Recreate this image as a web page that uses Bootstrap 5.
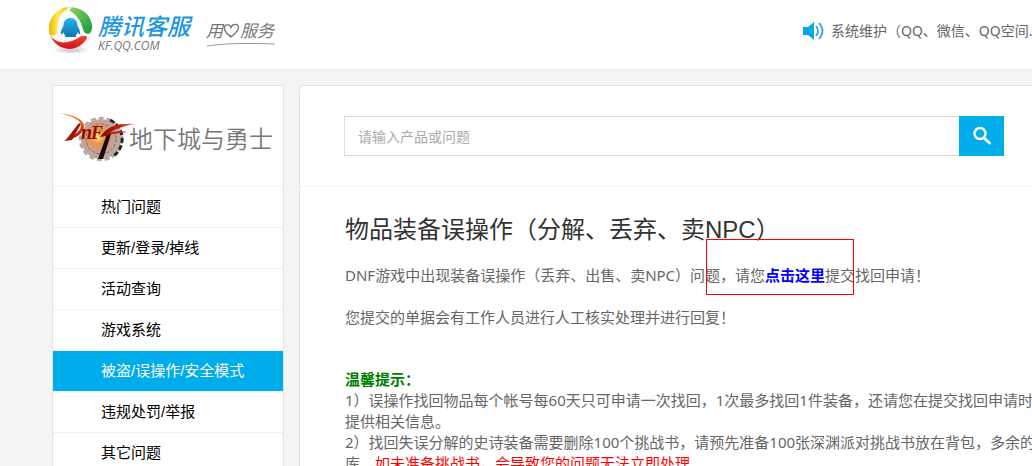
<!DOCTYPE html>
<html lang="zh-CN">
<head>
<meta charset="utf-8">
<meta name="viewport" content="width=device-width, initial-scale=1">
<title>腾讯客服 - 地下城与勇士</title>
<link href="https://cdn.jsdelivr.net/npm/bootstrap@5.3.0/dist/css/bootstrap.min.css" rel="stylesheet">
<style>
body { font-family: "Noto Sans", "Noto Sans CJK SC", sans-serif; font-size: 15px; line-height: 21px; color: #666; background: #f4f4f4; }
.site-head { height: 70px; padding-left: 48px; border-bottom: 1px solid #eaeaea; }
.brand-name { font-size: 23px; line-height: 28px; font-weight: 500; font-style: italic; color: #2196e0; }
.brand-host { font-family: "Open Sans", sans-serif; font-size: 12px; line-height: 12px; font-style: italic; color: #777; }
.slogan { font-size: 17px; line-height: 22px; font-style: italic; color: #777; }
.notice { flex: 0 0 230px; font-size: 14px; }
.notice a { color: #666; margin-left: 7px; }
.page-body { padding: 15px 0 0 52px; gap: 15px; }
.side { flex: 0 0 232px; border: 1px solid #e3e3e3; }
.side-head { height: 100px; padding-left: 3px; }
.side-title { font-size: 24px; line-height: 32px; padding-top: 5px; color: #777; margin-left: -15px; font-weight: 350; }
.side-nav { font-family: "Liberation Sans", "Noto Sans CJK SC", sans-serif; }
.side-nav a { height: 41px; padding: 0 0 2px 48px; border-top: 1px solid #f2f2f2; color: #000; }
.side-nav a.current { background: #00adeb; color: #fff; }
.panel { border: 1px solid #e3e3e3; border-right: 0; border-radius: 4px 0 0 0; min-width: 0; }
.search { height: 101px; padding: 30px 28px 30px 44px; border-bottom: 1px solid #f2f2f2; }
.search input { border: 1px solid #ddd; border-right: 0; padding: 0 13px; font-size: 14px; color: #666; }
.search input::placeholder { color: #aaa; opacity: 1; }
.search button { width: 45px; background: #00adeb; }
.article { padding: 27px 0 0 45px; }
.article h1 { font: 400 24px/32px "Liberation Sans", "Noto Sans CJK SC", sans-serif; color: #333; margin-bottom: 19px; }
.article p { margin-bottom: 21px; }
.article .tips { margin-top: 41px; }
.article .apply { color: #00f; }
.tips strong { color: green; }
.warn { color: #f00; }
.marker { width: 148px; height: 56px; left: -59px; top: -26px; border: 1px solid #f00; pointer-events: none; }
</style>
</head>
<body>
<div class="vh-100 overflow-hidden">
<header class="site-head bg-white d-flex align-items-start">
  <a href="#" class="d-flex text-decoration-none pt-1">
    <svg width="46" height="54" viewBox="0 0 46 54" aria-hidden="true">
      <defs>
        <linearGradient id="gy" x1="0" y1="0" x2="1" y2="0"><stop offset="0" stop-color="#f5b400"/><stop offset=".5" stop-color="#ffe95a"/><stop offset="1" stop-color="#f7c600"/></linearGradient>
        <linearGradient id="gg" x1="0" y1="0" x2="1" y2="1"><stop offset="0" stop-color="#8ed060"/><stop offset="1" stop-color="#129a3a"/></linearGradient>
        <linearGradient id="gr" x1="0" y1="0" x2="0" y2="1"><stop offset="0" stop-color="#f04a3a"/><stop offset="1" stop-color="#cf0d18"/></linearGradient>
        <linearGradient id="gb" x1="0" y1="0" x2="0" y2="1"><stop offset="0" stop-color="#29b0ea"/><stop offset="1" stop-color="#0878b8"/></linearGradient>
        <radialGradient id="gs"><stop offset="0" stop-color="#bbb"/><stop offset="1" stop-color="#fff"/></radialGradient>
      </defs>
      <ellipse cx="23" cy="46" rx="18" ry="4" fill="url(#gs)"/>
      <circle cx="22.500" cy="24.500" r="21" fill="#f8f8f8" stroke="#e0e0e0"/>
      <path d="M19 3C8 5 1 14 1 24c0 4 0 6 1 7 3 2 6 0 7-3C9 16 12 9 19 5z" fill="url(#gy)"/>
      <path d="M25 3.500c11 1 18 9 19 18 0 5-1 7-3 8-3 1-5-1-6-4C33 17 29 11 22 7c0-2 1-3.500 3-3.500z" fill="url(#gg)"/>
      <path d="M3 33c7 7 17 7 27 1 4-3 9-3 9 0-4 7-11 11-17 11-8 0-16-5-19-12z" fill="url(#gr)"/>
      <path d="M22.500 14c-5 0-7 4-7 8-2 3-3 6-2.500 8 1 1 2-1 2.500-2 0 2 1 3 2 3-1 1-1 2 1 2h8c2 0 2-1 1-2 1 0 2-1 2-3 1 1 2 3 2.500 2 .5-2-.5-5-2.500-8 0-4-2-8-7-8z" fill="url(#gb)"/>
    </svg>
    <span class="d-flex flex-column ps-1 pt-2">
      <span class="brand-name text-nowrap">腾讯客服</span>
      <span class="brand-host">KF.QQ.COM</span>
    </span>
  </a>
  <div class="slogan text-nowrap ms-3 pt-3 mt-1">
    <div class="d-flex align-items-center">用<svg width="17" height="16" viewBox="0 0 17 16" aria-hidden="true"><path d="M8 14C4 11 1 8 1.500 4.500 2 1 7 1 8 4.500 10 0 15 1 15.500 4 16 8 11 11 8 14l-1-2" fill="none" stroke="#777" stroke-width="1.300"/></svg>服务</div>
    <svg class="d-block" width="70" height="5" viewBox="0 0 70 5" aria-hidden="true"><path d="M1 4C20 1 45 1 69 2" fill="none" stroke="#999"/></svg>
  </div>
  <div class="notice ms-auto d-flex align-items-center overflow-hidden text-nowrap pt-3 mt-1">
    <svg class="flex-shrink-0" width="22" height="18" viewBox="0 0 22 18" aria-hidden="true"><path d="M1 5h5l6-5v18l-6-5H1z" fill="#00a8e8"/><path d="M14 4q4 5 0 10M17 1q7 8 0 16" fill="none" stroke="#3aa5dd" stroke-width="1.800"/></svg>
    <a href="#" class="text-decoration-none">系统维护（QQ、微信、QQ空间...</a>
  </div>
</header>

<div class="page-body d-flex">
  <aside class="side bg-white">
    <div class="side-head d-flex align-items-center">
      <svg class="flex-shrink-0" width="88" height="56" viewBox="0 0 88 56" aria-hidden="true">
        <defs>
          <radialGradient id="gear" cx=".42" cy=".45"><stop offset="0" stop-color="#ffe27a"/><stop offset=".35" stop-color="#e8954a"/><stop offset=".7" stop-color="#c9a08c"/><stop offset="1" stop-color="#b5aaa6"/></radialGradient>
          <linearGradient id="fire" x1="0" y1="0" x2="0" y2="1"><stop offset="0" stop-color="#f8801c"/><stop offset=".5" stop-color="#e0480f"/><stop offset="1" stop-color="#8a0a05"/></linearGradient>
          <linearGradient id="arm" x1="0" y1="0" x2="1" y2="0"><stop offset="0" stop-color="#7d0a05"/><stop offset=".6" stop-color="#c8230c"/><stop offset="1" stop-color="#f0a090"/></linearGradient>
        </defs>
        <circle cx="45" cy="31" r="20" fill="url(#gear)"/>
        <circle cx="45" cy="31" r="21" fill="none" stroke="#b8aaa5" stroke-width="2.500" stroke-dasharray="5 3"/>
        <path d="M54 12A21 21 0 0 1 56 49" fill="none" stroke="#33231f" stroke-width="3" stroke-dasharray="5 2.500"/>
        <circle cx="45" cy="31" r="15" fill="none" stroke="#a5613a" stroke-width="1" stroke-dasharray="3 2"/>
        <path d="M4 5C18 7 29 12 28 19c-1 7-9 12-21 14 10-4 17-9 18-15C26 12 15 8 4 5z" fill="url(#fire)"/>
        <path d="M23 15 9 33l7-1 9-16z" fill="#a01508"/>
        <text x="25" y="31" font-family="Liberation Serif, serif" font-size="20" font-weight="700" font-style="italic" fill="#8f0d06">n</text>
        <text x="35" y="31" font-family="Liberation Serif, serif" font-size="18" font-weight="700" font-style="italic" fill="#8f0d06">F</text>
        <path d="M51 26 42 51h5l8-25z" fill="#1c0a08"/>
        <path d="M44 29C52 17 64 15 79 16 68 18 60 20 54 25c6-2 12-2 18-1-10 1-17 2-22 4z" fill="url(#arm)"/>
      </svg>
      <div class="side-title text-nowrap">地下城与勇士</div>
    </div>
    <nav class="side-nav">
      <a href="#" class="d-flex align-items-center text-decoration-none">热门问题</a>
      <a href="#" class="d-flex align-items-center text-decoration-none">更新/登录/掉线</a>
      <a href="#" class="d-flex align-items-center text-decoration-none">活动查询</a>
      <a href="#" class="d-flex align-items-center text-decoration-none">游戏系统</a>
      <a href="#" class="current d-flex align-items-center text-decoration-none" aria-current="page">被盗/误操作/安全模式</a>
      <a href="#" class="d-flex align-items-center text-decoration-none">违规处罚/举报</a>
      <a href="#" class="d-flex align-items-center text-decoration-none">其它问题</a>
    </nav>
  </aside>
  <main class="panel bg-white flex-grow-1 overflow-hidden">
    <form class="search d-flex">
      <input type="text" class="form-control rounded-0 shadow-none" placeholder="请输入产品或问题" aria-label="请输入产品或问题">
      <button type="button" class="btn rounded-0 border-0 p-0 flex-shrink-0 d-flex align-items-center justify-content-center" aria-label="搜索">
        <svg width="20" height="20" viewBox="0 0 20 20" aria-hidden="true"><circle cx="8" cy="7.500" r="5.500" fill="none" stroke="#fff" stroke-width="2.500"/><path d="m12 12 5.500 5" stroke="#fff" stroke-width="3" stroke-linecap="round"/></svg>
      </button>
    </form>
    <article class="article text-nowrap">
      <h1>物品装备误操作（分解、丢弃、卖NPC）</h1>
      <p>DNF游戏中出现装备误操作（丢弃、出售、卖NPC）问题，请您<span class="position-relative"><a href="#" class="apply fw-bold text-decoration-none">点击这里</a><span class="marker position-absolute"></span></span>提交找回申请！</p>
      <p>您提交的单据会有工作人员进行人工核实处理并进行回复！</p>
      <p class="tips"><strong>温馨提示：</strong><br>
      1）误操作找回物品每个帐号每60天只可申请一次找回，1次最多找回1件装备，还请您在提交找回申请时<br>
      提供相关信息。<br>
      2）找回失误分解的史诗装备需要删除100个挑战书，请预先准备100张深渊派对挑战书放在背包，多余的<br>
      库。<span class="warn">如未准备挑战书，会导致您的问题无法立即处理。</span></p>
    </article>
  </main>
</div>
</div>
<script src="https://cdn.jsdelivr.net/npm/bootstrap@5.3.0/dist/js/bootstrap.bundle.min.js"></script>
</body>
</html>
